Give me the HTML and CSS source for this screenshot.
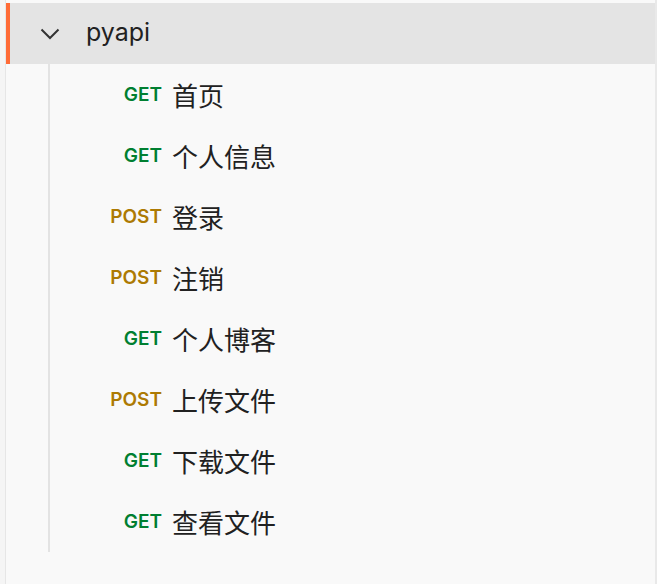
FILE: index.html
```html
<!DOCTYPE html>
<html lang="zh">
<head>
<meta charset="utf-8">
<title>pyapi</title>
<link rel="stylesheet" href="styles.css">
</head>
<body>
<div class="sidebar">
  <div class="folder">
    <div class="folder-head">
      <svg class="chevron" width="20" height="12" viewBox="0 0 20 12"><path d="M1.5 1.5 L10 10 L18.5 1.5" fill="none" stroke="#333" stroke-width="2"/></svg>
      <span class="folder-name">pyapi</span>
    </div>
    <div class="children">
      <div class="req"><span class="method get">GET</span><span class="name">首页</span></div>
      <div class="req"><span class="method get">GET</span><span class="name">个人信息</span></div>
      <div class="req"><span class="method post">POST</span><span class="name">登录</span></div>
      <div class="req"><span class="method post">POST</span><span class="name">注销</span></div>
      <div class="req"><span class="method get">GET</span><span class="name">个人博客</span></div>
      <div class="req"><span class="method post">POST</span><span class="name">上传文件</span></div>
      <div class="req"><span class="method get">GET</span><span class="name">下载文件</span></div>
      <div class="req"><span class="method get">GET</span><span class="name">查看文件</span></div>
    </div>
  </div>
</div>
</body>
</html>
```
FILE: styles.css
```css
html, body {
  margin: 0;
  padding: 0;
  background: #f5f5f5;
}
body {
  font-family: "Inter", "Noto Sans CJK SC", sans-serif;
  color: #212121;
}
.sidebar {
  margin-left: 5px;
  width: 652px;
  height: 584px;
  box-sizing: border-box;
  border-left: 1px solid #e6e6e6;
  border-right: 2px solid #e9e9e9;
  background: #f9f9f9;
  padding-top: 3px;
}
.folder-head {
  height: 61px;
  background: #e4e4e4;
  border-left: 4px solid #ff6c37;
  display: flex;
  align-items: center;
  padding-left: 30px;
}
.chevron {
  display: block;
  margin-top: 1px;
}
.folder-name {
  margin-left: 26px;
  font-size: 25px;
  line-height: 1;
  margin-top: -2px;
}
.children {
  margin-left: 42px;
  border-left: 2px solid #e3e3e3;
}
.req {
  height: 61px;
  display: flex;
  align-items: center;
}
.method {
  width: 112px;
  text-align: right;
  font-size: 19px;
  font-weight: 600;
  flex-shrink: 0;
}
.get { color: #007f31; }
.post { color: #ad7a03; }
.name {
  margin-left: 10px;
  font-size: 26px;
  font-family: "Noto Sans CJK SC", sans-serif;
  margin-top: -1px;
}
```
